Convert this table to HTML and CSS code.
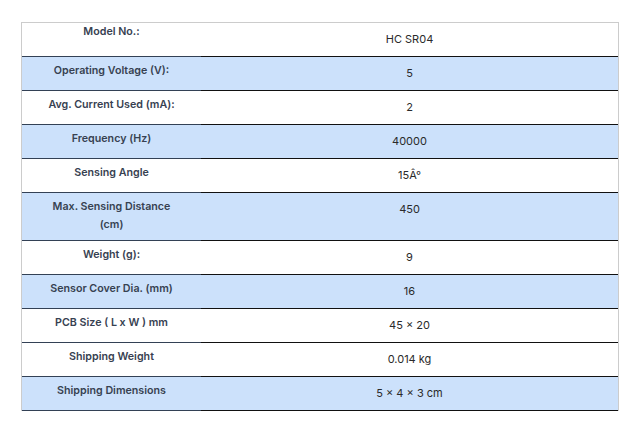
FILE: index.html
```html
<!DOCTYPE html>
<html>
<head>
<meta charset="utf-8">
<link rel="stylesheet" href="styles.css">
</head>
<body>
<div class="wrap">
<table class="specs">
<tbody>
<tr class="first"><th>Model No.:</th><td>HC SR04</td></tr>
<tr class="alt"><th>Operating Voltage (V):</th><td>5</td></tr>
<tr><th>Avg. Current Used (mA):</th><td>2</td></tr>
<tr class="alt"><th>Frequency (Hz)</th><td>40000</td></tr>
<tr><th>Sensing Angle</th><td>15Â°</td></tr>
<tr class="alt"><th>Max. Sensing Distance (cm)</th><td>450</td></tr>
<tr><th>Weight (g):</th><td>9</td></tr>
<tr class="alt"><th>Sensor Cover Dia. (mm)</th><td>16</td></tr>
<tr><th>PCB Size ( L x W ) mm</th><td>45 × 20</td></tr>
<tr><th>Shipping Weight</th><td>0.014 kg</td></tr>
<tr class="alt"><th>Shipping Dimensions</th><td>5 × 4 × 3 cm</td></tr>
</tbody>
</table>
</div>
</body>
</html>
```
FILE: styles.css
```css
html, body {
  margin: 0;
  padding: 0;
  background: #ffffff;
}
.wrap {
  padding: 22px 0 0 21px;
}
.specs {
  width: 598px;
  border-collapse: separate;
  border-spacing: 0;
  border-top: 1px solid #cccccc;
  border-left: 1px solid #cccccc;
  border-right: 1px solid #cccccc;
  font-family: Inter, "Liberation Sans", sans-serif;
  font-size: 11px;
  line-height: 18px;
}
.specs th {
  width: 139px;
  padding: 5px 20px 6px;
  vertical-align: top;
  text-align: center;
  font-size: 10.7px;
  font-weight: 600;
  color: #374151;
  border-bottom: 1px solid #334155;
}
.specs td {
  padding: 7px 10px 8px;
  vertical-align: top;
  text-align: center;
  font-weight: 400;
  color: #2a2a2a;
  border-bottom: 1px solid #111111;
}
.specs tr.first th {
  padding-top: 0;
}
.specs tr.alt th,
.specs tr.alt td {
  background: #cce1fb;
}
```
